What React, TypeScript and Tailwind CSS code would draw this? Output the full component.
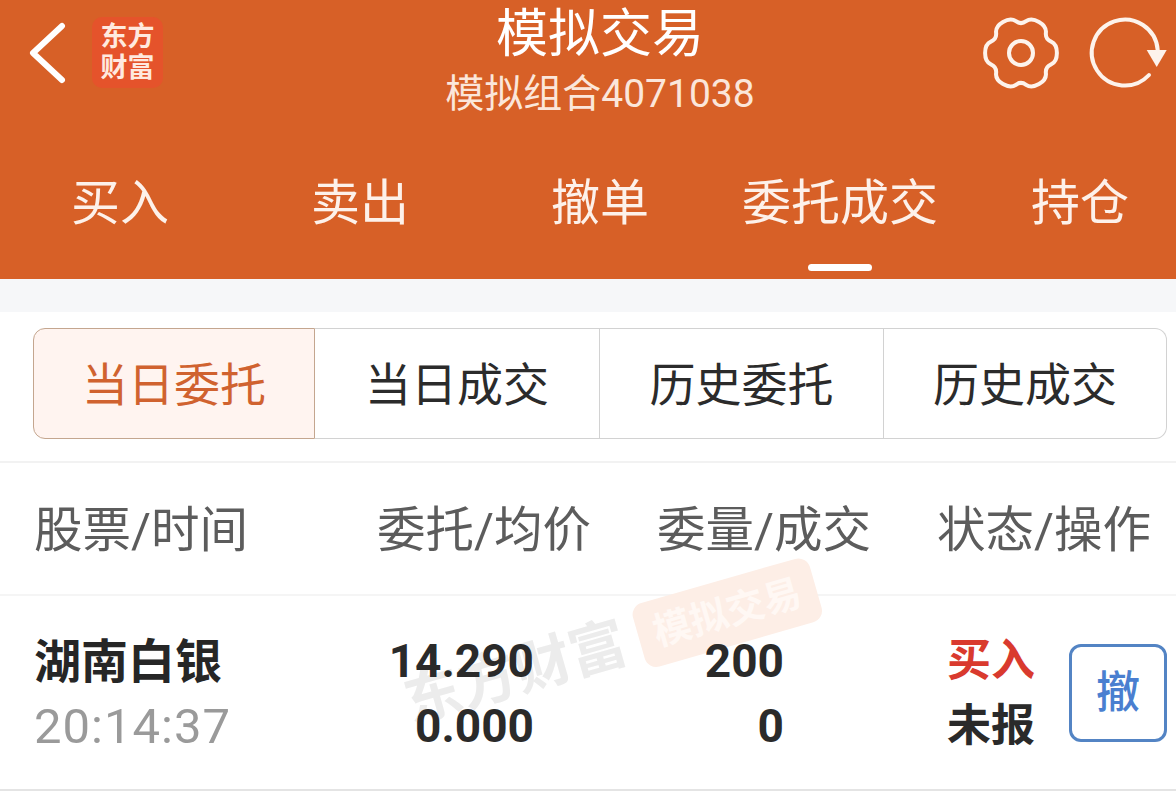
const tabs = ["买入", "卖出", "撤单", "委托成交", "持仓"];
const segments = ["当日成交", "历史委托", "历史成交"];

// 6 broad lobes with a soft valley between each, center 40,40
const gearPath = (() => {
  const pts: number[][] = [];
  for (let i = 0; i < 6; i++) {
    const t = (i * Math.PI) / 3;
    const spread = Math.PI / 13;
    [[t - spread, 37], [t + spread, 37], [t + Math.PI / 6, 28]].forEach(([a, r]) => {
      pts.push([40 + r * Math.cos(a), 40 + r * Math.sin(a)]);
    });
  }
  const mid = (a: number[], b: number[]) => [(a[0] + b[0]) / 2, (a[1] + b[1]) / 2];
  const start = mid(pts[pts.length - 1], pts[0]);
  let d = `M${start[0].toFixed(1)} ${start[1].toFixed(1)}`;
  pts.forEach((p, i) => {
    const m = mid(p, pts[(i + 1) % pts.length]);
    d += `Q${p[0].toFixed(1)} ${p[1].toFixed(1)} ${m[0].toFixed(1)} ${m[1].toFixed(1)}`;
  });
  return d + "Z";
})();

function Header() {
  return (
    <div className="h-[279px] bg-[#d76027] text-white">
      <div className="flex h-[134px]">
        <div className="flex w-[300px] items-start pl-[28px] pt-[17px]">
          <svg width="38" height="62" viewBox="0 0 38 62" className="mt-[5px]">
            <path d="M34 4 L5 31 L34 58" fill="none" stroke="#fff" strokeWidth="6" strokeLinecap="round" strokeLinejoin="round" />
          </svg>
          <div className="ml-[26px] flex h-[71px] w-[71px] flex-col items-center justify-center rounded-[10px] bg-[#e5532b] text-[27px] font-bold leading-[31px] text-[#ffe9df]">
            <span>东方</span>
            <span>财富</span>
          </div>
        </div>
        <div className="flex w-[600px] flex-col items-center">
          <div className="mt-[5px] text-[52px] leading-[60px]">模拟交易</div>
          <div className="mt-[7px] text-[39px] leading-[44px] text-[#fbe6da]">模拟组合4071038</div>
        </div>
        <div className="flex flex-1 items-start justify-end pr-[6px] pt-[10px]">
          <svg width="80" height="80" viewBox="0 0 80 80" className="mt-[3px]">
            <path d={gearPath} fill="none" stroke="#fdf3ec" strokeWidth="4" strokeLinejoin="round" />
            <circle cx="40" cy="40" r="12" fill="none" stroke="#fdf3ec" strokeWidth="4" />
          </svg>
          <svg width="85" height="85" viewBox="0 0 85 85" className="ml-[24px]">
            <path d="M72.7 40 A33 33 0 1 0 64 65" fill="none" stroke="#fdf3ec" strokeWidth="4" strokeLinecap="round" />
            <path d="M61.7 40 H81.7 L71.7 57 Z" fill="#fdf3ec" />
          </svg>
        </div>
      </div>
      <div className="grid w-[1200px] grid-cols-5">
        {tabs.map((t, i) => (
          <div key={t} className="flex h-[145px] flex-col items-center">
            <span className="mt-[42px] text-[49px] leading-[56px] text-[#fdf1ea]">{t}</span>
            {i === 3 && <span className="mt-[32px] h-[7px] w-[64px] rounded-full bg-white" />}
          </div>
        ))}
      </div>
    </div>
  );
}

function Watermark() {
  return (
    <div className="pointer-events-none absolute left-[398px] top-[17px] flex -rotate-[16deg] items-center gap-[14px]">
      <span className="text-[57px] font-bold leading-[64px] text-[#ececec]">东方财富</span>
      <span className="rounded-[12px] bg-[#fdeee6] px-[16px] py-[10px] text-[38px] font-bold leading-[46px] text-[#fff8f4]">模拟交易</span>
    </div>
  );
}

export default function App() {
  return (
    <div className="h-[792px] w-[1176px] overflow-hidden bg-white font-['Roboto','Noto_Sans_CJK_SC',sans-serif]">
      <Header />
      <div className="h-[33px] bg-[#f6f7f9]" />

      <div className="flex h-[151px] border-b-2 border-[#f2f2f2] pl-[33px] pr-[9px] pt-[16px]">
        <div className="flex h-[111px] w-full">
          <div className="flex w-[282px] items-center justify-center rounded-l-[12px] border border-[#c4a68f] bg-[#fff4f0] pt-[3px] text-[46px] text-[#d0622f]">
            当日委托
          </div>
          {segments.map((s, i) => (
            <div
              key={s}
              className={
                i === 2
                  ? "flex flex-1 items-center justify-center rounded-r-[12px] border border-l-0 border-[#d2d2d2] pt-[3px] text-[46px] text-[#2b2b2b]"
                  : i === 0
                    ? "flex w-[285px] items-center justify-center border-y border-r border-[#d2d2d2] pt-[3px] text-[46px] text-[#2b2b2b]"
                    : "flex w-[284px] items-center justify-center border-y border-r border-[#d2d2d2] pt-[3px] text-[46px] text-[#2b2b2b]"
              }
            >
              {s}
            </div>
          ))}
        </div>
      </div>

      <div className="flex h-[133px] items-center border-b-2 border-[#f5f5f5] pl-[34px] pt-[6px] text-[48.5px] text-[#5c5c5c]">
        <span className="w-[343px]">股票/时间</span>
        <span className="w-[280px]">委托/均价</span>
        <span className="w-[280px]">委量/成交</span>
        <span>状态/操作</span>
      </div>

      <div className="relative flex h-[195px] items-center border-b-2 border-[#e4e4e4] pl-[34px] pr-[9px] pt-[2px]">
        <Watermark />
        <div className="relative flex w-[300px] flex-col">
          <span className="text-[47px] font-bold leading-[66px] text-[#262626]">湖南白银</span>
          <span className="text-[49px] leading-[64px] tracking-[1px] text-[#9a9a9a]">20:14:37</span>
        </div>
        <div className="relative flex w-[200px] flex-col text-right text-[46px] font-bold leading-[65px] text-[#2a2a2a]">
          <span>14.290</span>
          <span>0.000</span>
        </div>
        <div className="relative flex w-[250px] flex-col text-right text-[46px] font-bold leading-[65px] text-[#2a2a2a]">
          <span>200</span>
          <span>0</span>
        </div>
        <div className="relative ml-[163px] flex w-[88px] flex-col text-[44px] font-bold leading-[65px]">
          <span className="text-[#d93a2e]">买入</span>
          <span className="text-[#2a2a2a]">未报</span>
        </div>
        <button className="relative mb-[2px] ml-[34px] flex h-[98px] w-[98px] items-center justify-center rounded-[12px] border-[3px] border-[#5384c4] text-[44px] font-medium text-[#4a7fd0]">
          撤
        </button>
      </div>
    </div>
  );
}
